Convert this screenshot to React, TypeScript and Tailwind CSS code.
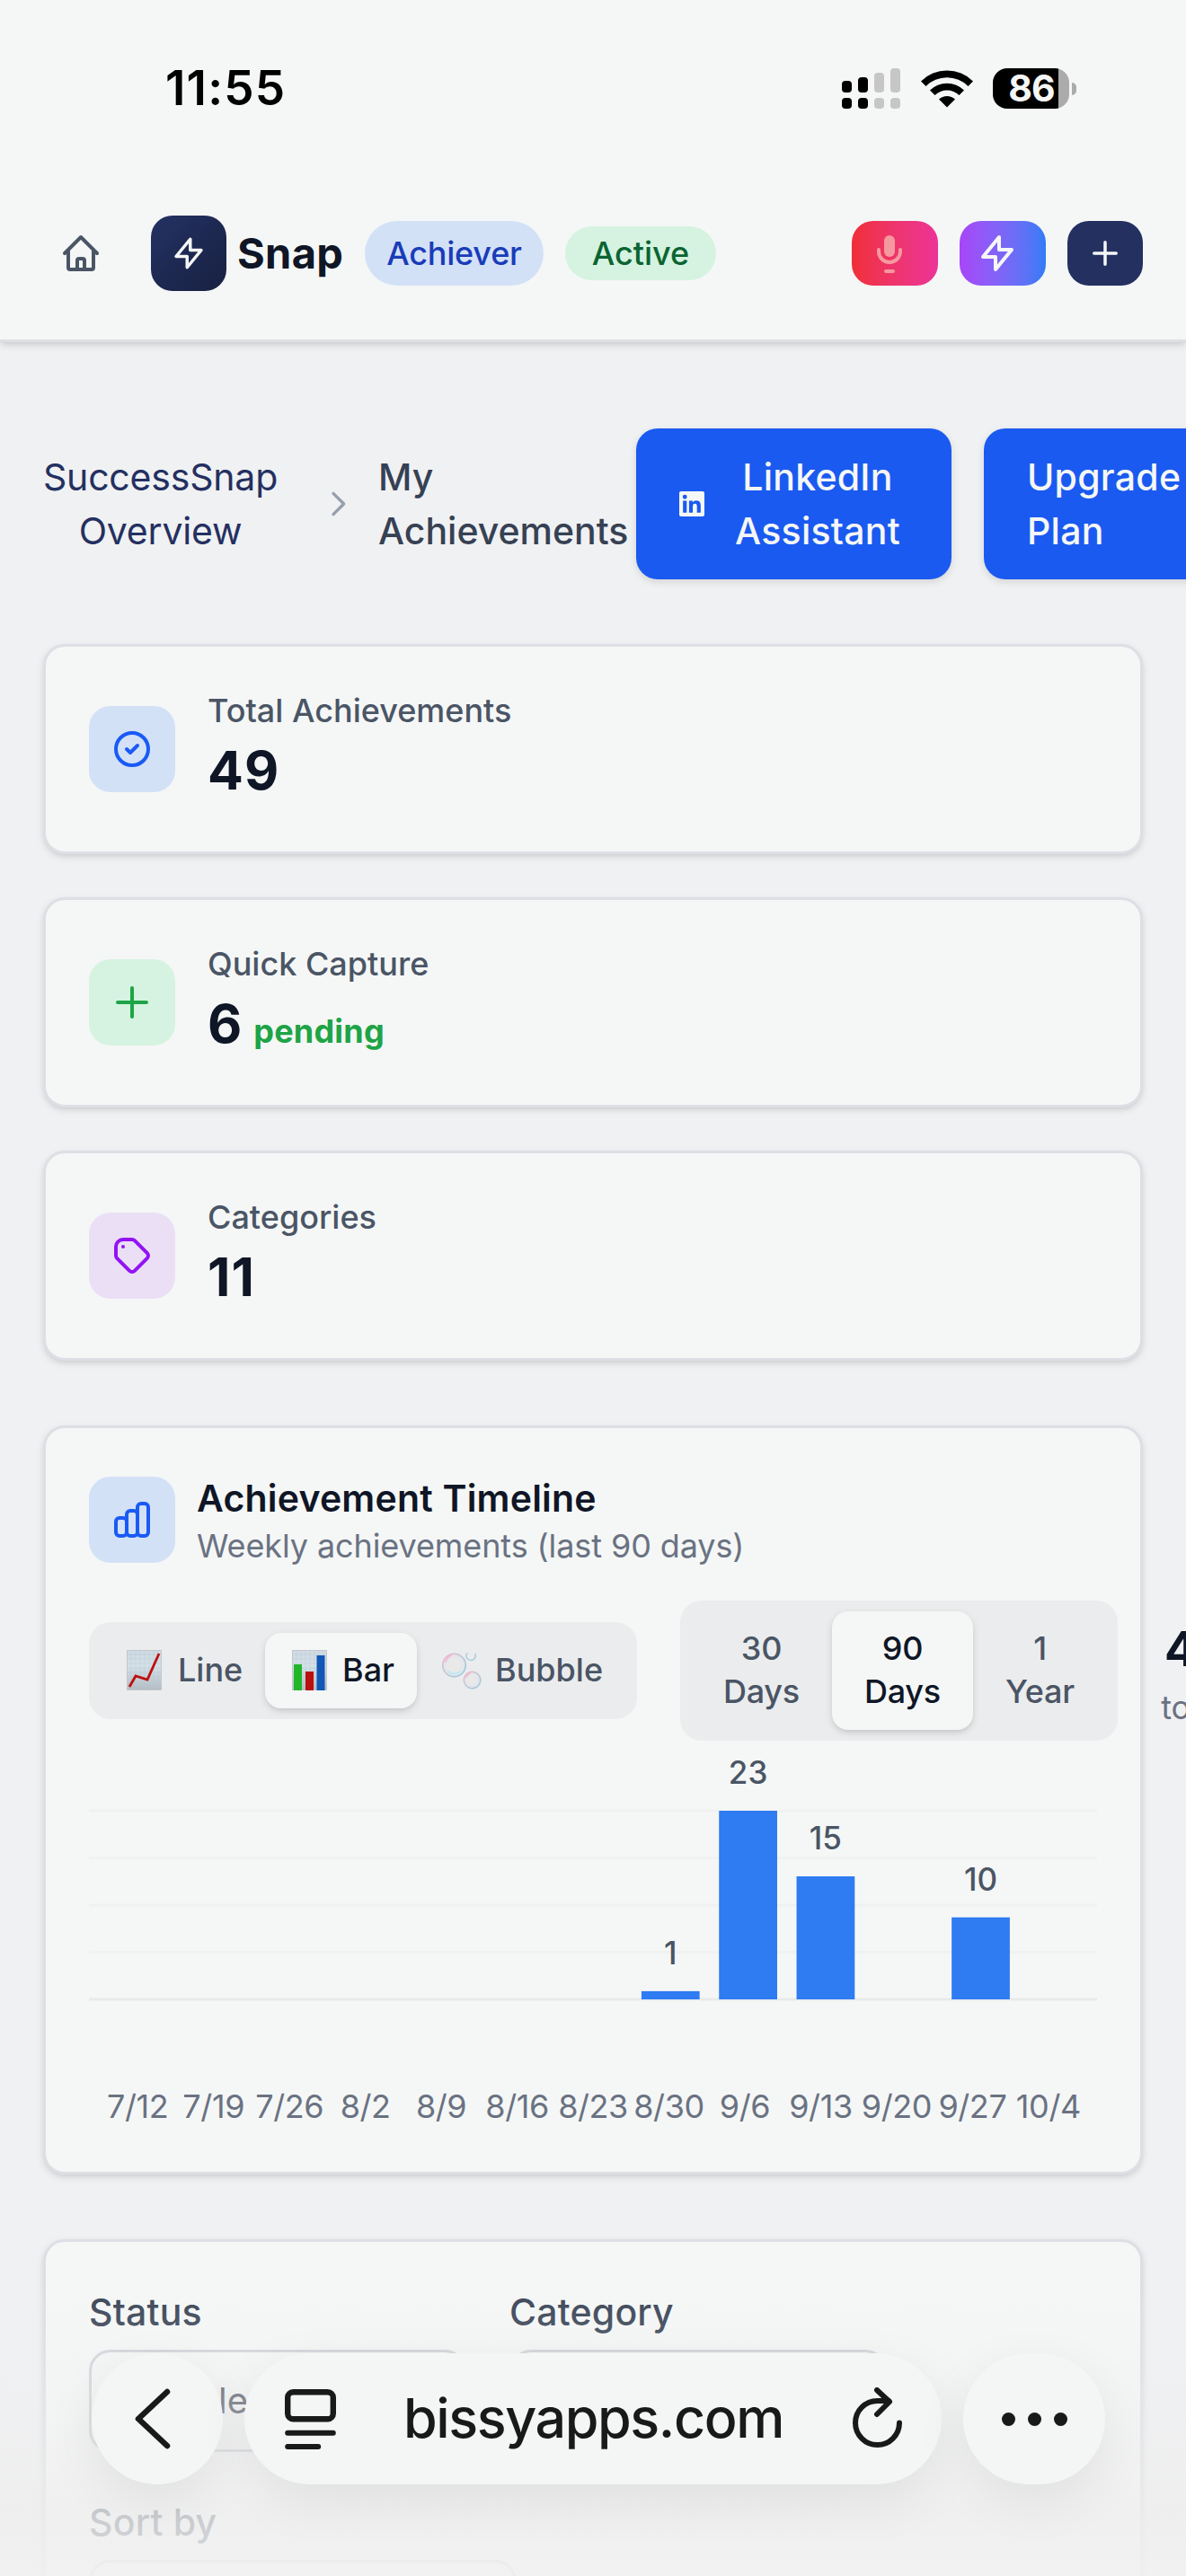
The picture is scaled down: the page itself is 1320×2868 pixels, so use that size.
import type { ReactNode } from "react";
import clsx from "clsx";

interface IconProps {
  d: string;
  className?: string;
}

// 24-unit outline icon, stroked with the current text colour
function Icon({ d, className }: IconProps) {
  return (
    <svg
      viewBox="0 0 24 24"
      fill="none"
      stroke="currentColor"
      strokeWidth={2}
      strokeLinecap="round"
      strokeLinejoin="round"
      className={clsx("shrink-0", className)}
    >
      <path d={d} />
    </svg>
  );
}

const ICONS = {
  home: "M3 12l2-2m0 0l7-7 7 7M5 10v10a1 1 0 001 1h3m10-11l2 2m-2-2v10a1 1 0 01-1 1h-3m-6 0a1 1 0 001-1v-4a1 1 0 011-1h2a1 1 0 011 1v4a1 1 0 001 1m-6 0h6",
  bolt: "M13 10V3L4 14h7v7l9-11h-7z",
  plusSmall: "M5 12h14M12 5v14",
  plus: "M12 4v16m8-8H4",
  chevron: "M9 5l7 7-7 7",
  check: "M9 12l2 2 4-4m6 2a9 9 0 11-18 0 9 9 0 0118 0z",
  tag: "M7 7h.01M7 3h5c.512 0 1.024.195 1.414.586l7 7a2 2 0 010 2.828l-7 7a2 2 0 01-2.828 0l-7-7A1.994 1.994 0 013 12V7a4 4 0 014-4z",
  chart:
    "M9 19v-6a2 2 0 00-2-2H5a2 2 0 00-2 2v6a2 2 0 002 2h2a2 2 0 002-2zm0 0V9a2 2 0 012-2h2a2 2 0 012 2v10m-6 0a2 2 0 002 2h2a2 2 0 002-2m0 0V5a2 2 0 012-2h2a2 2 0 012 2v14a2 2 0 01-2 2h-2a2 2 0 01-2-2z",
};

const WEEKS = [
  { label: "7/12", count: 0 },
  { label: "7/19", count: 0 },
  { label: "7/26", count: 0 },
  { label: "8/2", count: 0 },
  { label: "8/9", count: 0 },
  { label: "8/16", count: 0 },
  { label: "8/23", count: 0 },
  { label: "8/30", count: 1 },
  { label: "9/6", count: 23 },
  { label: "9/13", count: 15 },
  { label: "9/20", count: 0 },
  { label: "9/27", count: 10 },
  { label: "10/4", count: 0 },
];

function StatusBar() {
  return (
    <div className="flex h-[197px] items-center justify-between pl-[184px] pr-[122px]">
      <span className="text-[53px] font-semibold leading-none tracking-[1.2px] text-black">
        11:55
      </span>
      <div className="flex items-center">
        <svg width="65" height="45" viewBox="0 0 65 45">
          <g fill="#000">
            <rect x="0" y="14" width="11" height="13" rx="4" />
            <rect x="18" y="10" width="11" height="17" rx="4" />
            <rect x="0" y="33" width="11" height="12" rx="4" />
            <rect x="18" y="33" width="11" height="12" rx="4" />
          </g>
          <g fill="#c5c6c5">
            <rect x="36" y="5" width="11" height="22" rx="4" />
            <rect x="54" y="0" width="11" height="27" rx="4" />
            <rect x="36" y="33" width="11" height="12" rx="4" />
            <rect x="54" y="33" width="11" height="12" rx="4" />
          </g>
        </svg>
        <svg width="58" height="43" viewBox="0 0 58 43" className="ml-[23px]">
          <path d="M0 13.5 A41 41 0 0 1 58 13.5 L52.5 19 A33.5 33.5 0 0 0 5.500 19 Z" />
          <path d="M10 23.500 A27 27 0 0 1 48 23.500 L42.500 29 A19.500 19.500 0 0 0 15.500 29 Z" />
          <path d="M20 33.500 A13 13 0 0 1 38 33.500 L29 42.500 Z" />
        </svg>
        <div className="ml-[22px] flex items-center gap-[3px]">
          <div className="flex h-[45px] w-[85px] items-center justify-center rounded-[16px] bg-[linear-gradient(90deg,#000_73px,#ababab_73px)] pl-[1px]">
            <span className="text-[41px] font-bold leading-none tracking-[-0.8px] text-[#f5f7f6]">
              86
            </span>
          </div>
          <div className="h-[14px] w-[5px] rounded-r-full bg-[#ababab]" />
        </div>
      </div>
    </div>
  );
}

function Header() {
  return (
    <header className="relative h-[381px] border-b-[3px] border-[#dddfe4] bg-[#f5f7f6] shadow-[0_3px_9px_rgba(0,0,0,0.12),0_3px_6px_-3px_rgba(0,0,0,0.1)]">
      <StatusBar />
      <nav className="flex h-[170px] items-center pl-[66px] pr-12">
        <Icon d={ICONS.home} className="size-12 text-[#4a5565]" />
        <div className="ml-[54px] flex size-[84px] items-center justify-center rounded-3xl bg-linear-to-br from-[#243163] to-[#182142]">
          <Icon d={ICONS.bolt} className="size-[42px] text-[#f5f7f6]" />
        </div>
        <span className="w-[154px] pl-3 text-[47px] font-bold tracking-[0.3px] text-[#0f1626]">
          Snap
        </span>
        <span className="flex h-[72px] w-[199px] items-center justify-center rounded-full bg-[#d3e1f7] pb-px text-[36px] font-medium tracking-[-0.2px] text-[#193cb8]">
          Achiever
        </span>
        <span className="ml-6 flex h-[60px] w-[168px] items-center justify-center rounded-full bg-[#d5f3e0] pb-px text-[36px] font-medium text-[#0b6431]">
          Active
        </span>
        <div className="ml-auto flex gap-6">
          <button className="flex h-[72px] w-24 items-center rounded-3xl bg-linear-to-r from-[#f02f36] to-[#ec3397] pl-[18px]">
            <svg viewBox="0 0 48 48" className="size-12" fill="none">
              <rect x="18" y="4" width="12" height="24" rx="6" fill="#f6999f" />
              <path
                d="M12 20v2a12 12 0 0024 0v-2"
                stroke="#f6999f"
                strokeWidth="4"
                strokeLinecap="round"
              />
              <rect x="18" y="42" width="12" height="4" rx="2" fill="#f6999f" />
            </svg>
          </button>
          <button className="flex h-[72px] w-24 items-center rounded-3xl bg-linear-to-r from-[#a745f8] to-[#2f7cf6] pl-[18px]">
            <Icon d={ICONS.bolt} className="size-12 text-[#f5f7f6]" />
          </button>
          <button className="flex h-[72px] w-[84px] items-center justify-center rounded-3xl bg-[#243060]">
            <Icon d={ICONS.plusSmall} className="size-[42px] text-[#f5f7f6]" />
          </button>
        </div>
      </nav>
    </header>
  );
}

function Breadcrumb() {
  return (
    <div className="flex h-[168px] w-[1500px] items-center text-[41px] font-medium leading-[60px]">
      <div className="w-[261px] text-center font-normal tracking-[-0.2px] text-[#243060]">
        SuccessSnap
        <br />
        Overview
      </div>
      <Icon d={ICONS.chevron} className="ml-[47px] size-10 text-[#979fae]" />
      <div className="ml-[25px] w-[287px] text-[#364153]">
        My
        <br />
        Achievements
      </div>
      <button className="flex h-[168px] w-[351px] items-center rounded-3xl bg-[#1a5af0] pl-12 tracking-[0.25px] text-[#f5f7f6] shadow-[0_3px_9px_rgba(0,0,0,0.12)]">
        <svg viewBox="0 0 24 24" className="size-7 shrink-0" fill="currentColor">
          <path d="M20.447 20.452h-3.554v-5.569c0-1.328-.027-3.037-1.852-3.037-1.853 0-2.136 1.445-2.136 2.939v5.667H9.351V9h3.414v1.561h.046c.477-.9 1.637-1.85 3.37-1.85 3.601 0 4.267 2.370 4.267 5.455v6.286zM5.337 7.433a2.062 2.062 0 01-2.063-2.065 2.064 2.064 0 112.063 2.065zm1.782 13.019H3.555V9h3.564v11.452zM22.225 0H1.771C.792 0 0 .774 0 1.729v20.542C0 23.227.792 24 1.771 24h20.451C23.200 24 24 23.227 24 22.271V1.729C24 .774 23.200 0 22.222 0h.003z" />
        </svg>
        <span className="ml-[31px] w-[190px] text-center">
          LinkedIn
          <br />
          Assistant
        </span>
      </button>
      <button className="ml-9 h-[168px] w-[300px] rounded-3xl bg-[#1a5af0] pl-12 text-left tracking-[0.25px] text-[#f5f7f6] shadow-[0_3px_9px_rgba(0,0,0,0.12)]">
        Upgrade
        <br />
        Plan
      </button>
    </div>
  );
}

function Card({
  className,
  children,
}: {
  className?: string;
  children: ReactNode;
}) {
  return (
    <section
      className={clsx(
        "w-[1224px] rounded-3xl border-[3px] border-[#dddfe5] bg-[#f5f7f6] p-12 shadow-[0_3px_9px_rgba(0,0,0,0.1),0_3px_6px_-3px_rgba(0,0,0,0.1)]",
        className,
      )}
    >
      {children}
    </section>
  );
}

interface StatCardProps {
  icon: string;
  tone: string;
  label: string;
  value: string;
  note?: string;
}

function StatCard({ icon, tone, label, value, note }: StatCardProps) {
  return (
    <Card className="flex h-[234px] items-center">
      <div
        className={clsx(
          "flex size-24 items-center justify-center rounded-3xl",
          tone,
        )}
      >
        <Icon d={icon} className="size-12" />
      </div>
      <div className="ml-9">
        <p className="-mt-px mb-px text-[36px] font-medium leading-[48px] text-[#4a5565]">
          {label}
        </p>
        <p className="text-[59px] font-bold leading-[84px] tracking-[1px] text-[#0f1626]">
          {value}
          {note && (
            <span className="ml-3 text-[36px] font-bold leading-none tracking-[0.2px] text-[#1ea446]">
              {note}
            </span>
          )}
        </p>
      </div>
    </Card>
  );
}

// Sheet of graph paper shared by the line and bar glyphs
function GraphPaper({ children }: { children: ReactNode }) {
  return (
    <svg width="39" height="45" viewBox="0 0 39 45" className="shrink-0">
      <defs>
        <linearGradient id="paper" x1="0" y1="0" x2="0" y2="1">
          <stop offset="0" stopColor="#cfdae2" />
          <stop offset="0.4" stopColor="#d5e1e9" />
          <stop offset="1" stopColor="#b4bcc3" />
        </linearGradient>
      </defs>
      <rect width="39" height="45" fill="url(#paper)" />
      <path
        d="M0 5h39M0 10h39M0 15h39M0 20h39M0 25h39M0 30h39M0 35h39M0 40h39M5 0v45M10 0v45M15 0v45M20 0v45M25 0v45M30 0v45M35 0v45"
        stroke="#b7c6d1"
        strokeWidth="0.6"
        opacity="0.6"
      />
      <rect x="0.5" y="0.5" width="38" height="44" fill="none" stroke="#c3c8cd" />
      {children}
    </svg>
  );
}

function BubblesGlyph() {
  return (
    <svg width="45" height="45" viewBox="0 0 45 45" fill="none" className="shrink-0">
      <defs>
        <linearGradient id="film" x1="0" y1="0" x2="1" y2="1">
          <stop offset="0" stopColor="#f2b3d2" />
          <stop offset="0.45" stopColor="#c5c5d2" />
          <stop offset="1" stopColor="#8fc9de" />
        </linearGradient>
        <radialGradient id="gloss">
          <stop offset="0.5" stopColor="#e9e9ea" />
          <stop offset="0.85" stopColor="#e3e6ea" />
          <stop offset="1" stopColor="#cfe0ea" />
        </radialGradient>
      </defs>
      <g stroke="url(#film)" strokeWidth="1.5" fill="url(#gloss)">
        <circle cx="14.500" cy="17" r="12.800" />
        <circle cx="34.500" cy="33.500" r="9.300" />
        <path d="M29 3.500A5 5 0 1 0 37.500 4" fill="none" stroke="#a9cfdf" />
      </g>
      <path d="M5 13a11 11 0 016-7" stroke="#f6b8d6" strokeWidth="2" strokeLinecap="round" />
      <path d="M8 24a10 10 0 0013 0" stroke="#c3e6f2" strokeWidth="2" strokeLinecap="round" />
      <path d="M28 30a7 7 0 014-4" stroke="#f6b8c6" strokeWidth="1.500" strokeLinecap="round" />
    </svg>
  );
}

const ACTIVE_TAB =
  "rounded-[18px] bg-[#f5f7f6] text-[#0f1626] shadow-[0_3px_9px_rgba(0,0,0,0.12),0_3px_6px_-3px_rgba(0,0,0,0.1)]";

function ChartTypeTabs() {
  return (
    <div className="flex h-[108px] w-[610px] shrink-0 rounded-3xl bg-[#ebeced] p-3 text-[36px] font-medium text-[#4a5565]">
      <button className="flex w-[184px] items-center gap-[18px] pb-0.5 pl-[30px]">
        <GraphPaper>
          <path
            d="M3 41l7-12 13 4L36 4"
            fill="none"
            stroke="#bd1010"
            strokeWidth="2.800"
          />
        </GraphPaper>
        Line
      </button>
      <button
        className={clsx(
          "flex w-[169px] items-center gap-[17px] pb-0.5 pl-[30px]",
          ACTIVE_TAB,
        )}
      >
        <GraphPaper>
          <path d="M2 16h9v29H2z" fill="#22b62b" />
          <path d="M15 24h9v21h-9z" fill="#bb1010" />
          <path d="M27.500 6h9v39h-9z" fill="#1157b5" />
        </GraphPaper>
        Bar
      </button>
      <button className="flex w-[233px] items-center gap-[15px] pb-0.5 pl-[27px]">
        <BubblesGlyph />
        Bubble
      </button>
    </div>
  );
}

function RangeTabs() {
  return (
    <div className="ml-12 flex h-[156px] w-[487px] shrink-0 rounded-3xl bg-[#ebeced] p-3 text-[36px] font-medium leading-[48px] tracking-[-0.2px] text-[#4a5565]">
      <button className="w-[157px] pb-0.5">
        30
        <br />
        Days
      </button>
      <button className={clsx("w-[157px] pb-0.5", ACTIVE_TAB)}>
        90
        <br />
        Days
      </button>
      <button className="w-[149px] pb-0.5">
        1
        <br />
        Year
      </button>
    </div>
  );
}

const CHART_WIDTH = 1122;
const MAX_BAR = 210;
const BASELINE = 288;

function BarChart() {
  const step = CHART_WIDTH / WEEKS.length;
  const max = Math.max(...WEEKS.map((w) => w.count));

  return (
    <svg
      width={CHART_WIDTH}
      height="384"
      viewBox="0 0 1122 384"
      className="block"
      fontSize="35"
      fontWeight="500"
    >
      {[0, 1, 2, 3, 4].map((i) => (
        <rect
          key={i}
          x="0"
          y={BASELINE - 1.5 - (i * MAX_BAR) / 4}
          width={CHART_WIDTH}
          height="3"
          fill={i === 0 ? "#e9ebeb" : "#f0f1f1"}
        />
      ))}
      {WEEKS.map((week, i) => {
        if (week.count === 0) return null;
        const height = (week.count / max) * MAX_BAR;
        return (
          <g key={week.label}>
            <rect
              x={step * (i + 0.125)}
              y={BASELINE - height}
              width={step * 0.75}
              height={height}
              fill="#2e7bf2"
            />
            <text
              x={step * (i + 0.5)}
              y={BASELINE - height - 30}
              textAnchor="middle"
              fill="#4a5565"
            >
              {week.count}
            </text>
          </g>
        );
      })}
    </svg>
  );
}

function TimelineCard() {
  return (
    <Card className="h-[834px]">
      <div className="flex items-center">
        <div className="flex size-24 items-center justify-center rounded-3xl bg-[#d3e1f7] text-[#1a5af5]">
          <Icon d={ICONS.chart} className="size-12" />
        </div>
        <div className="ml-6">
          <h2 className="text-[41px] font-semibold leading-[60px] tracking-[0.2px] text-[#0f1626]">
            Achievement Timeline
          </h2>
          <p className="-mt-px mb-px text-[36px] leading-[48px] tracking-[-0.1px] text-[#6a7282]">
            Weekly achievements (last 90 days)
          </p>
        </div>
      </div>
      <div className="mt-9 flex items-center">
        <ChartTypeTabs />
        <RangeTabs />
        <div className="ml-12 shrink-0 text-center">
          <p className="pl-1 text-[53px] font-bold leading-[84px] text-[#0f1626]">49</p>
          <p className="-mt-px mb-px text-[36px] leading-[48px] text-[#6a7282]">
            total
          </p>
        </div>
      </div>
      <BarChart />
      <div className="-mt-px flex px-3 text-[36px] leading-[48px] tracking-[-0.4px] text-[#6a7282]">
        {WEEKS.map((week) => (
          <span key={week.label} className="flex w-0 flex-1 justify-center">
            {week.label}
          </span>
        ))}
      </div>
    </Card>
  );
}

function Filter({
  label,
  value,
  width,
}: {
  label: string;
  value?: string;
  width: string;
}) {
  return (
    <div className={width}>
      <div className="text-[41px] font-medium leading-[60px] tracking-[0.2px] text-[#364153]">
        {label}
      </div>
      <div className="mt-3 flex h-[114px] items-center rounded-3xl border-[3px] border-[#d0d3da] bg-[#f5f7f6] pl-[141px] text-[40px] text-[#4a5060]">
        {value}
      </div>
    </div>
  );
}

function BrowserBar() {
  return (
    <div className="absolute inset-x-0 bottom-0 h-[338px] bg-[linear-gradient(180deg,rgba(241,241,241,0)_0px,rgba(241,241,241,0.15)_70px,rgba(239,239,239,0.4)_150px,rgba(238,238,238,0.8)_270px,rgba(241,241,241,0.88)_338px)]">
      <div className="flex gap-6 pl-[102px] pt-[90px]">
        <button className="flex size-[146px] items-center justify-center rounded-full bg-[#f4f5f5] shadow-[0_18px_60px_rgba(0,0,0,0.07)]">
          <svg width="44" height="72" viewBox="0 0 44 72" fill="none" className="-ml-2.5">
            <path
              d="M38 6L6 36l32 30"
              stroke="#181a19"
              strokeWidth="6.500"
              strokeLinecap="round"
              strokeLinejoin="round"
            />
          </svg>
        </button>
        <div className="flex h-[146px] w-[776px] items-center rounded-full bg-[#f4f5f5] pl-[45px] text-[#181a19] shadow-[0_18px_60px_rgba(0,0,0,0.07)]">
          <svg width="57" height="67" viewBox="0 0 57 67" fill="none">
            <rect
              x="3.200"
              y="3.200"
              width="50.600"
              height="30"
              rx="6"
              stroke="currentColor"
              strokeWidth="6.400"
            />
            <path
              d="M3.200 48.700h50.600M3.200 64h34"
              stroke="currentColor"
              strokeWidth="6"
              strokeLinecap="round"
            />
          </svg>
          <span className="ml-[75px] w-[498px] text-[61px] font-medium tracking-[-1.4px]">
            bissyapps.com
          </span>
          <svg width="58" height="70" viewBox="0 0 58 70" fill="none">
            <g
              stroke="currentColor"
              strokeWidth="6"
              strokeLinecap="round"
              strokeLinejoin="round"
            >
              <path d="M54 39.500A24.500 24.500 0 1 1 29.500 15H42" />
              <path d="M29 3l14 13-14 14" />
            </g>
          </svg>
        </div>
        <button className="flex h-[146px] w-[158px] items-center justify-center gap-[14px] rounded-full bg-[#f4f5f5] shadow-[0_18px_60px_rgba(0,0,0,0.07)]">
          <span className="size-[15px] rounded-full bg-[#181a19]" />
          <span className="size-[15px] rounded-full bg-[#181a19]" />
          <span className="size-[15px] rounded-full bg-[#181a19]" />
        </button>
      </div>
    </div>
  );
}

export default function App() {
  return (
    <div className="relative h-[2868px] w-[1320px] overflow-hidden bg-[#f0f1f3] font-[Inter,sans-serif]">
      <Header />
      <main className="px-12 pt-24">
        <Breadcrumb />
        <div className="mt-[72px] flex flex-col gap-12">
          <StatCard
            icon={ICONS.check}
            tone="bg-[#d3e1f7] text-[#1a5af5]"
            label="Total Achievements"
            value="49"
          />
          <StatCard
            icon={ICONS.plus}
            tone="bg-[#d5f3e0] text-[#1ea446]"
            label="Quick Capture"
            value="6"
            note="pending"
          />
          <StatCard
            icon={ICONS.tag}
            tone="bg-[#ebdff6] text-[#9213f5]"
            label="Categories"
            value="11"
          />
        </div>
        <div className="mt-[72px] flex flex-col gap-[72px]">
          <TimelineCard />
          <Card className="flex h-[600px] flex-wrap content-start gap-12">
            <Filter label="Status" value="le" width="w-[420px]" />
            <Filter label="Category" width="w-[420px]" />
            <Filter label="Sort by" width="w-[476px]" />
          </Card>
        </div>
      </main>
      <BrowserBar />
    </div>
  );
}
